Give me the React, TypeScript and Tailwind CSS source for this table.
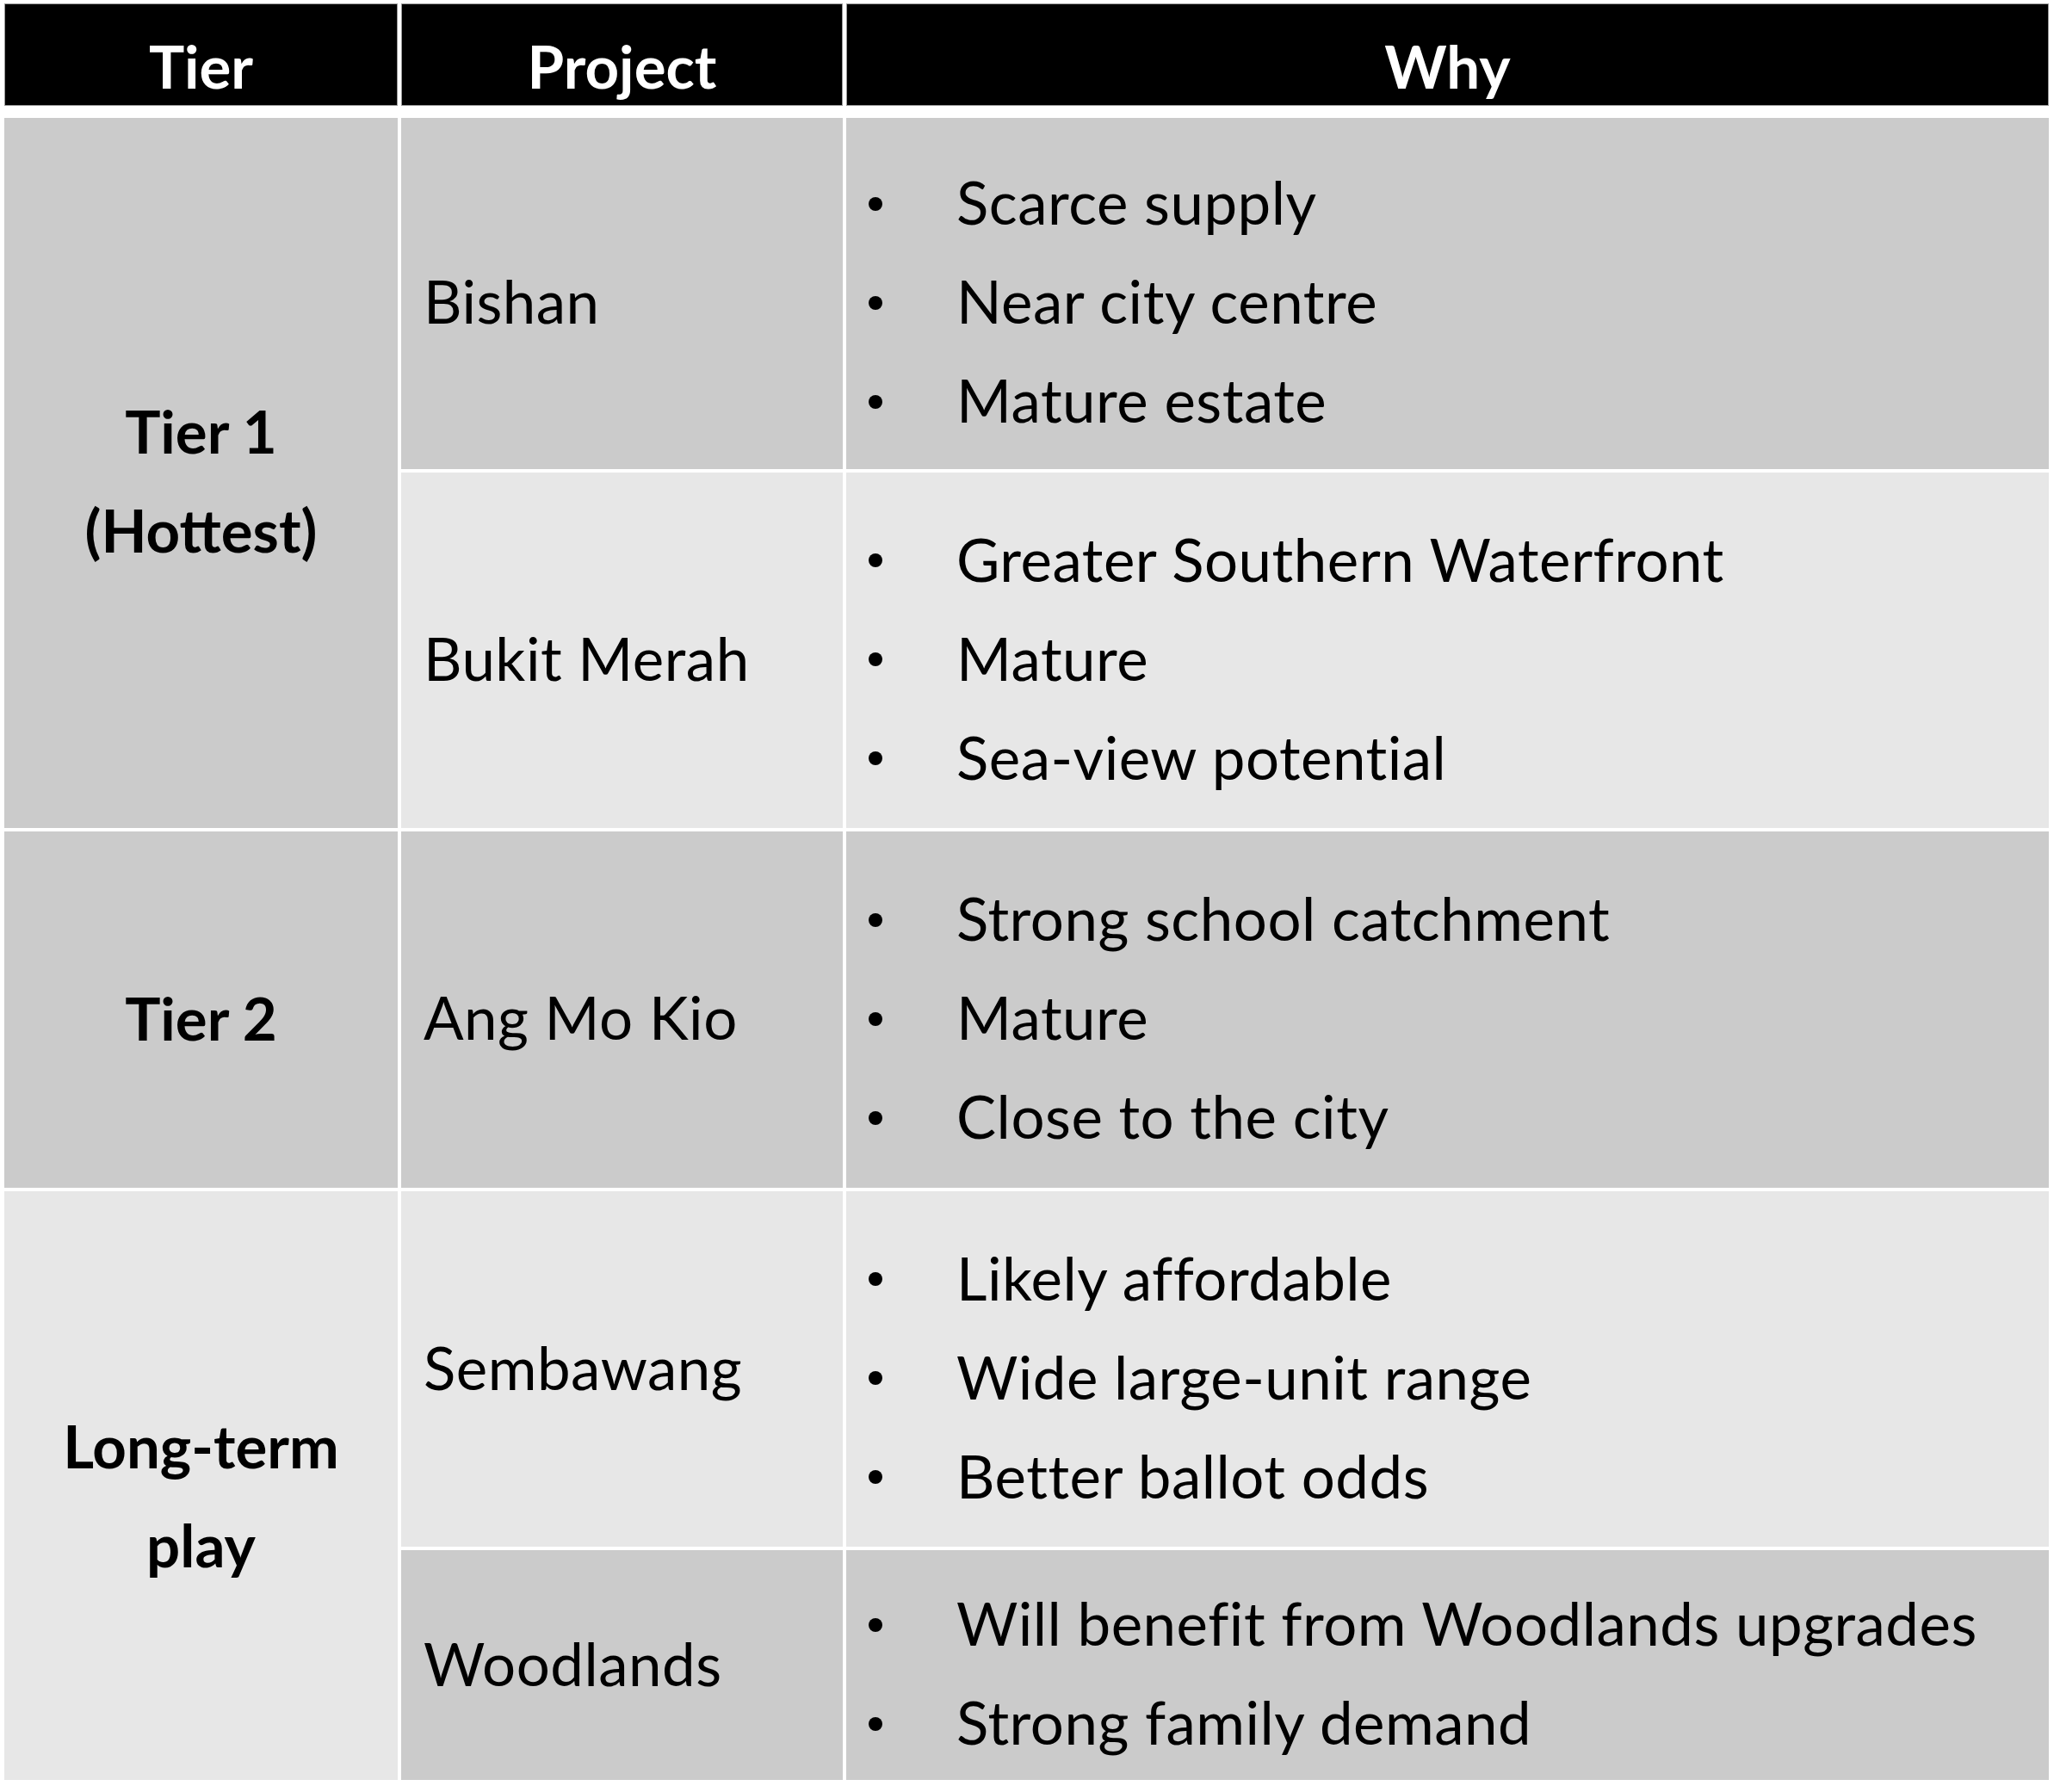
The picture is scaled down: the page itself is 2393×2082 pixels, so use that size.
import React from 'react';

type Row = {
  project: string;
  bg: string;
  projectPad: string;
  points: string[];
};

const FONT = { fontFamily: 'Lato, "Open Sans", "Liberation Sans", sans-serif' };

const rows: Row[] = [
  { project: 'Bishan', bg: 'bg-[#cbcbcb]', projectPad: 'pt-[17px]', points: ['Scarce supply', 'Near city centre', 'Mature estate'] },
  { project: 'Bukit Merah', bg: 'bg-[#e7e7e7]', projectPad: 'pt-[17px]', points: ['Greater Southern Waterfront', 'Mature', 'Sea-view potential'] },
  { project: 'Ang Mo Kio', bg: 'bg-[#cbcbcb]', projectPad: 'pt-[17px]', points: ['Strong school catchment', 'Mature', 'Close to the city'] },
  { project: 'Sembawang', bg: 'bg-[#e7e7e7]', projectPad: 'pb-[4px]', points: ['Likely affordable', 'Wide large-unit range', 'Better ballot odds'] },
  { project: 'Woodlands', bg: 'bg-[#cbcbcb]', projectPad: 'pb-[4px]', points: ['Will benefit from Woodlands upgrades', 'Strong family demand'] },
];

function HeaderCell({ children }: { children: React.ReactNode }) {
  return (
    <div className="h-[119px] bg-black border border-[#9a9a9a] flex items-center justify-center pt-[26px] text-white font-bold text-[69px] leading-[69px]">
      {children}
    </div>
  );
}

function TierCell({ lines, bg, span, pad }: { lines: string[]; bg: string; span: string; pad: string }) {
  return (
    <div className={`${bg} ${span} ${pad} flex flex-col items-center justify-center font-bold text-[69px] leading-[115px] text-black`}>
      {lines.map((l) => (
        <div key={l}>{l}</div>
      ))}
    </div>
  );
}

function ProjectCell({ row }: { row: Row }) {
  return (
    <div className={`${row.bg} ${row.projectPad} flex items-center pl-[26px] text-[69px] leading-[115px] tracking-[0.5px] text-black`}>
      {row.project}
    </div>
  );
}

function WhyCell({ row }: { row: Row }) {
  return (
    <div className={`${row.bg} flex flex-col justify-center pt-[17px]`}>
      {row.points.map((p) => (
        <div key={p} className="flex items-center h-[115px] text-[69px] leading-[115px] tracking-[0.5px] text-black whitespace-nowrap">
          <span className="w-[16px] h-[16px] rounded-full bg-black ml-[26px] mr-[86px] mt-[4px] shrink-0" />
          <span>{p}</span>
        </div>
      ))}
    </div>
  );
}

export default function App() {
  return (
    <div className="w-[2393px] h-[2082px] bg-white pt-[4px] pl-[5px]" style={FONT}>
      <div className="w-[2375px] flex flex-col gap-[14px]">
        <div className="grid grid-cols-[457px_513px_1397px] gap-x-[4px]">
          <HeaderCell>Tier</HeaderCell>
          <HeaderCell>Project</HeaderCell>
          <HeaderCell>Why</HeaderCell>
        </div>

        <div className="grid grid-cols-[457px_513px_1397px] grid-rows-[408px_413px_414px_413px_267px] gap-[4px]">
          <TierCell lines={['Tier 1', '(Hottest)']} bg="bg-[#cbcbcb]" span="row-span-2" pad="pt-[16px]" />
          <ProjectCell row={rows[0]} />
          <WhyCell row={rows[0]} />
          <ProjectCell row={rows[1]} />
          <WhyCell row={rows[1]} />

          <TierCell lines={['Tier 2']} bg="bg-[#cbcbcb]" span="" pad="pt-[18px]" />
          <ProjectCell row={rows[2]} />
          <WhyCell row={rows[2]} />

          <TierCell lines={['Long-term', 'play']} bg="bg-[#e7e7e7]" span="row-span-2" pad="pt-[21px]" />
          <ProjectCell row={rows[3]} />
          <WhyCell row={rows[3]} />
          <ProjectCell row={rows[4]} />
          <WhyCell row={rows[4]} />
        </div>
      </div>
    </div>
  );
}
